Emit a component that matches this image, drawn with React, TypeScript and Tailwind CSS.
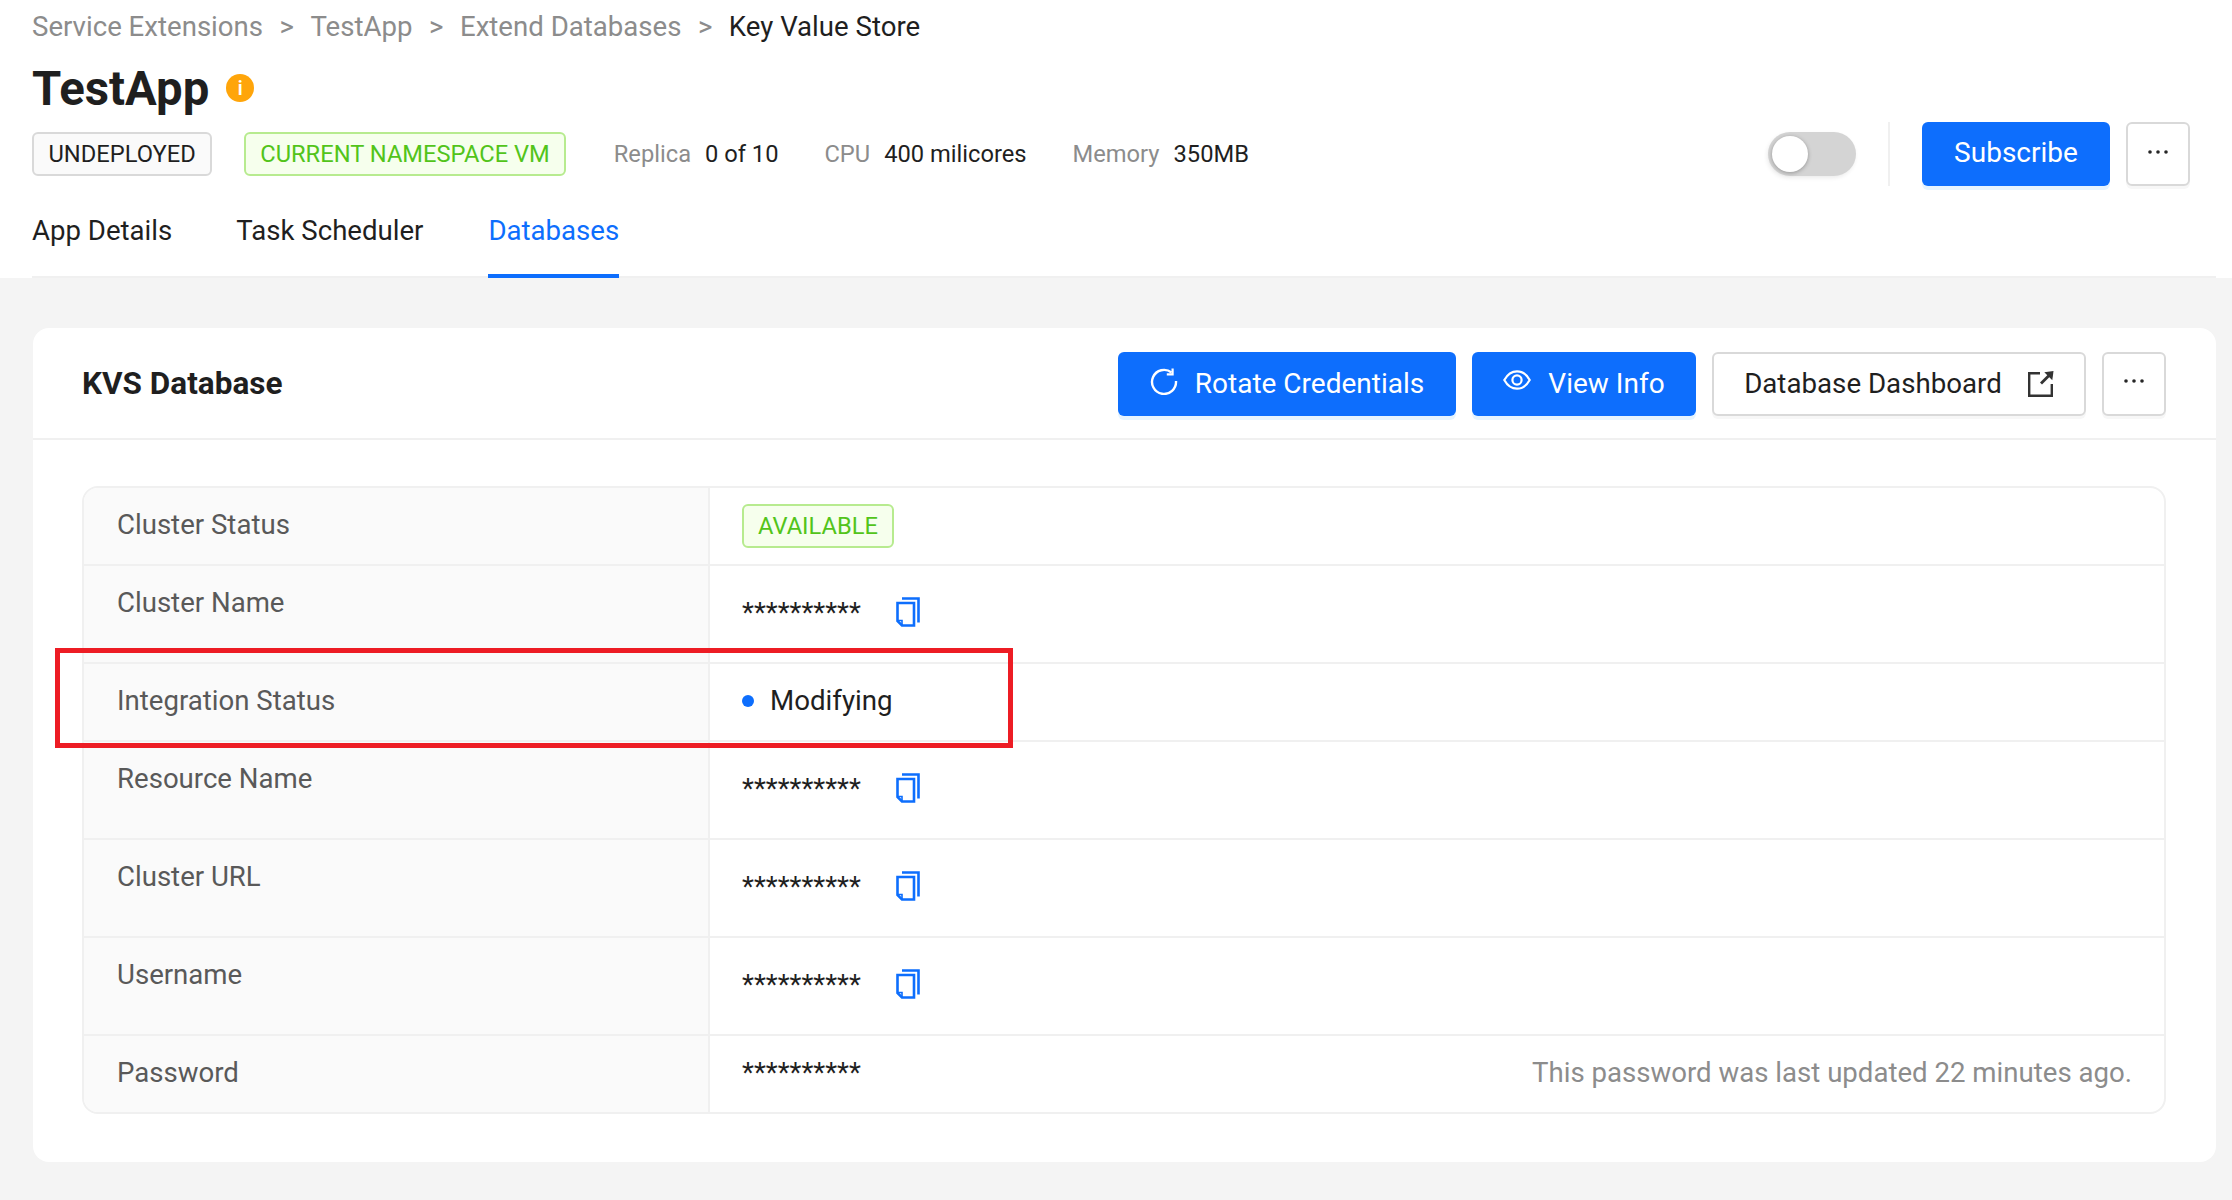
import React from "react";

const Copy = () => (
  <svg width="24" height="30" viewBox="0 0 24 30" fill="none" stroke="#0d6efd" strokeWidth="2.6" className="-mt-[2px] shrink-0">
    <path d="M6 1.5h16.5v24" />
    <path d="M1.5 6h16.5v22.5H6L1.5 24V6z" />
    <path d="M1.5 23.5H6v5" strokeWidth="1.6" />
  </svg>
);

const Dots = () => (
  <svg width="22" height="6" viewBox="0 0 22 6" fill="#262626">
    <circle cx="3" cy="3" r="1.8" />
    <circle cx="11" cy="3" r="1.8" />
    <circle cx="19" cy="3" r="1.8" />
  </svg>
);

const Masked = () => <span className="text-[27.6px] leading-none text-[#1f1f1f]">**********</span>;

const Tag = ({ children, green }: { children: React.ReactNode; green?: boolean }) =>
  green ? (
    <span className="flex h-[44px] items-center rounded-[6px] border-2 border-[#b7eb8f] bg-[#f6ffed] px-[14px] pt-[1px] text-[23.7px] text-[#52c41a]">
      {children}
    </span>
  ) : (
    <span className="flex h-[44px] items-center rounded-[6px] border-2 border-[#d9d9d9] bg-[#fafafa] px-[14.5px] pt-[1px] text-[23.7px] text-[#1f1f1f]">
      {children}
    </span>
  );

const Row = ({
  label,
  h,
  pt,
  last,
  children,
}: {
  label: string;
  h: string;
  pt: string;
  last?: boolean;
  children: React.ReactNode;
}) => (
  <div className={`flex ${h} ${last ? "" : "border-b-[2px] border-[#f0f0f0]"}`}>
    <div className={`w-[626px] shrink-0 border-r-[2px] border-[#f0f0f0] bg-[#fafafa] pl-[33px] ${pt} text-[27.6px] leading-[36px] text-[#595959]`}>
      {label}
    </div>
    <div className="min-w-0 flex-1 pl-[32px] pr-[32px]">{children}</div>
  </div>
);

const Secret = () => (
  <div className="flex h-full items-start pt-[33px]">
    <Masked />
    <span className="ml-[35px]">
      <Copy />
    </span>
  </div>
);

export default function App() {
  return (
    <div className="relative h-[1200px] w-[2232px] overflow-hidden bg-[#f4f4f4] font-['Roboto',sans-serif]">
      <header className="h-[278px] bg-white pl-[32px] pr-[16px]">
        <nav className="flex h-[54px] items-center gap-[16.5px] text-[27.6px] text-[#8c8c8c]">
          <span>Service Extensions</span>
          <span>&gt;</span>
          <span>TestApp</span>
          <span>&gt;</span>
          <span>Extend Databases</span>
          <span>&gt;</span>
          <span className="text-[#1f1f1f]">Key Value Store</span>
        </nav>
        <div className="flex h-[68px] items-center gap-[17px]">
          <h1 className="pt-[3px] text-[47.3px] font-bold leading-none text-[#1f1f1f]">TestApp</h1>
          <span className="flex h-[28px] w-[28px] items-center justify-center rounded-full bg-[#ffa50a] text-[21px] font-medium leading-none text-white">
            i
          </span>
        </div>
        <div className="flex h-[64px] items-center pr-[26px]">
          <div className="flex items-center gap-[32px]">
            <Tag>UNDEPLOYED</Tag>
            <Tag green>CURRENT NAMESPACE VM</Tag>
          </div>
          <div className="ml-[48px] flex items-center pt-[1px] text-[23.7px]">
            <span className="text-[#8c8c8c]">Replica</span>
            <span className="ml-[14px] text-[#1f1f1f]">0 of 10</span>
            <span className="ml-[46px] text-[#8c8c8c]">CPU</span>
            <span className="ml-[14px] text-[#1f1f1f]">400 milicores</span>
            <span className="ml-[46px] text-[#8c8c8c]">Memory</span>
            <span className="ml-[14px] text-[#1f1f1f]">350MB</span>
          </div>
          <div className="ml-auto flex items-center">
            <div className="flex h-[44px] w-[88px] items-center rounded-full bg-[#d4d4d4] shadow-[-1px_2px_4px_rgba(0,0,0,0.08)]">
              <span className="ml-[4px] h-[36px] w-[36px] rounded-full bg-white shadow-[0_1px_4px_rgba(0,0,0,0.3)]" />
            </div>
            <div className="ml-[32px] h-[64px] w-[2px] bg-[#f0f0f0]" />
            <button className="ml-[32px] h-[64px] w-[188px] rounded-[6px] bg-[#0d6efd] pb-[2px] text-[28px] text-white shadow-[0_4px_0_#e6f4ff]">
              Subscribe
            </button>
            <button className="ml-[16px] flex h-[64px] w-[64px] items-center justify-center rounded-[6px] border-2 border-[#d9d9d9] bg-white pb-[4px] shadow-[0_3px_0_#f7f7f7]">
              <Dots />
            </button>
          </div>
        </div>
        <div className="flex h-[92px] items-stretch border-b-[2px] border-[#f0f0f0] text-[27.6px] text-[#1f1f1f]">
          <span className="pt-[24px]">App Details</span>
          <span className="ml-[64px] pt-[24px]">Task Scheduler</span>
          <span className="ml-[65px] -mb-[2px] border-b-[4px] border-[#0d6efd] pt-[24px] text-[#0d6efd]">Databases</span>
        </div>
      </header>

      <main className="ml-[33px] mr-[16px] mt-[50px] h-[834px] rounded-[16px] bg-white">
        <div className="flex h-[112px] items-center border-b-[2px] border-[#f0f0f0] pl-[49px] pr-[50px] pt-[2px]">
          <h2 className="text-[31.5px] font-bold text-[#1f1f1f]">KVS Database</h2>
          <div className="ml-auto flex items-center gap-[16px] text-[28px]">
            <button className="flex h-[64px] w-[338px] items-center justify-center gap-[17px] rounded-[6px] bg-[#0d6efd] text-white shadow-[0_4px_0_#e6f4ff]">
              <svg width="28" height="28" viewBox="0 0 28 28" fill="none" stroke="white" strokeWidth="2.4" className="-mt-[7px]">
                <path d="M21.5 5.5A12 12 0 1 0 26 14" />
                <path d="M22.6 1.5v5.8h-5.8" strokeWidth="2.2" />
              </svg>
              Rotate Credentials
            </button>
            <button className="flex h-[64px] w-[224px] items-center justify-center gap-[17px] rounded-[6px] bg-[#0d6efd] text-white shadow-[0_4px_0_#e6f4ff]">
              <svg width="28" height="20" viewBox="0 0 28 20" fill="none" stroke="white" strokeWidth="2.2" className="-mt-[8px]">
                <path d="M1.3 10C4.5 4.2 9 1.3 14 1.3S23.5 4.2 26.7 10C23.5 15.8 19 18.7 14 18.7S4.5 15.8 1.3 10z" />
                <circle cx="14" cy="10" r="4.6" />
              </svg>
              View Info
            </button>
            <button className="flex h-[64px] w-[374px] items-center justify-center gap-[24px] rounded-[6px] border-2 border-[#d9d9d9] bg-white text-[27.7px] text-[#1f1f1f] shadow-[0_3px_0_#f7f7f7]">
              Database Dashboard
              <svg width="28" height="28" viewBox="0 0 28 28" fill="none" stroke="#333333" strokeWidth="2.4">
                <path d="M14 3.2H3.2v22.6h22.6V14" />
                <path d="M15 13.5L23 5.5" strokeWidth="2.8" />
                <path d="M27.5 1l-1.2 9.2-8-8z" fill="#333333" stroke="none" />
              </svg>
            </button>
            <button className="flex h-[64px] w-[64px] items-center justify-center rounded-[6px] border-2 border-[#d9d9d9] bg-white pb-[6px] shadow-[0_3px_0_#f7f7f7]">
              <Dots />
            </button>
          </div>
        </div>

        <div className="ml-[49px] mr-[50px] mt-[46px] overflow-hidden rounded-[16px] border-[2px] border-[#f0f0f0]">
          <Row label="Cluster Status" h="h-[78px]" pt="pt-[19px]">
            <div className="flex h-full items-start pt-[16px]">
              <Tag green>AVAILABLE</Tag>
            </div>
          </Row>
          <Row label="Cluster Name" h="h-[98px]" pt="pt-[19px]">
            <Secret />
          </Row>
          <Row label="Integration Status" h="h-[78px]" pt="pt-[19px]">
            <div className="flex h-full items-center pb-[2px]">
              <span className="h-[12px] w-[12px] rounded-full bg-[#0d6efd]" />
              <span className="ml-[16px] text-[27.7px] text-[#1f1f1f]">Modifying</span>
            </div>
          </Row>
          <Row label="Resource Name" h="h-[98px]" pt="pt-[19px]">
            <Secret />
          </Row>
          <Row label="Cluster URL" h="h-[98px]" pt="pt-[19px]">
            <Secret />
          </Row>
          <Row label="Username" h="h-[98px]" pt="pt-[19px]">
            <Secret />
          </Row>
          <Row label="Password" h="h-[76px]" pt="pt-[19px]" last>
            <div className="flex h-full items-start justify-between pt-[23px]">
              <Masked />
              <span className="-mt-[4px] text-[27.6px] leading-[36px] text-[#8c8c8c]">This password was last updated 22 minutes ago.</span>
            </div>
          </Row>
        </div>
      </main>

      <div className="absolute left-[55px] top-[648px] h-[100px] w-[958px] border-[5px] border-[#ed1c24]" />
    </div>
  );
}
